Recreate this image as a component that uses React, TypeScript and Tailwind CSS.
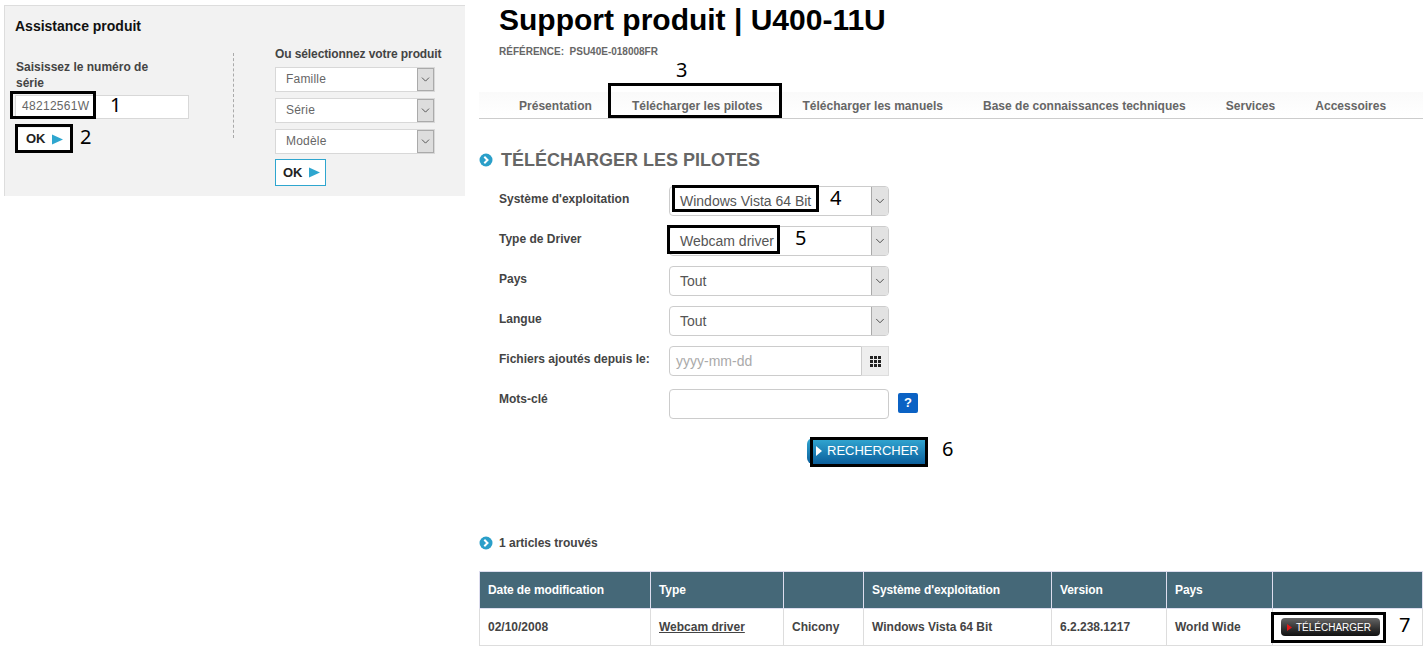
import React from "react";
import { ChevronDown } from "lucide-react";

const Frame = ({ c }: { c: string }) => (
  <div className={`absolute border-[3px] border-black ${c}`} />
);

const Num = ({ c, n }: { c: string; n: string }) => (
  <span className={`absolute font-['Noto_Sans',sans-serif] text-[20px] leading-[24px] text-black ${c}`}>{n}</span>
);

const SmallSelect = ({ label }: { label: string }) => (
  <div className="flex h-[25px] w-[160px] border border-[#d8d8d8] bg-white">
    <span className="flex-1 pl-[10px] text-[12px] leading-[23px] tracking-[0.2px] text-[#666]">{label}</span>
    <span className="flex w-[17px] items-center justify-center border border-[#aaa] bg-[#ddd]">
      <ChevronDown size={13} strokeWidth={1.6} className="text-[#444]" />
    </span>
  </div>
);

const OkButton = ({ c }: { c: string }) => (
  <div className={`flex items-center gap-[6px] bg-white text-[13px] font-bold text-[#222] ${c}`}>
    OK
    <svg width="11" height="11" viewBox="0 0 11 11"><path d="M0 0.5 L11 5.5 L0 10.5 Z" fill="#2ea6cf" /></svg>
  </div>
);

const Bullet = () => (
  <svg width="14" height="14" viewBox="0 0 14 14" className="shrink-0">
    <circle cx="7" cy="7" r="6.5" fill="#2a9fc9" />
    <path d="M5.3 3.8 L8.5 7 L5.3 10.2" fill="none" stroke="#fff" strokeWidth="2" />
  </svg>
);

const BigSelect = ({ value }: { value: string }) => (
  <div className="flex h-[30px] w-[220px] overflow-hidden rounded-[4px] border border-[#ccc] bg-white">
    <span className="flex-1 pl-[10px] text-[14px] leading-[28px] text-[#555]">{value}</span>
    <span className="flex w-[17px] items-center justify-center border-l border-[#aaa] bg-[#e2e2e2]">
      <ChevronDown size={14} strokeWidth={1.6} className="text-[#444]" />
    </span>
  </div>
);

const FormRow = ({ label, labelClass = "pt-[5px]", children }: { label: string; labelClass?: string; children: React.ReactNode }) => (
  <div className="flex h-[30px] pl-[20px]">
    <span className={`w-[170px] text-[12px] leading-[16px] font-bold text-[#444] ${labelClass}`}>{label}</span>
    {children}
  </div>
);

const tabs = ["Présentation", "Télécharger les pilotes", "Télécharger les manuels", "Base de connaissances techniques", "Services", "Accessoires"];

const cols = [
  { w: "w-[171px]", h: "Date de modification", d: "02/10/2008" },
  { w: "w-[133px]", h: "Type", d: "Webcam driver", link: true },
  { w: "w-[80px]", h: "", d: "Chicony" },
  { w: "w-[188px]", h: "Système d'exploitation", d: "Windows Vista 64 Bit" },
  { w: "w-[115px]", h: "Version", d: "6.2.238.1217" },
  { w: "w-[106px]", h: "Pays", d: "World Wide" },
];

export default function App() {
  return (
    <div className="relative flex h-[650px] w-[1426px] overflow-hidden bg-white pl-[4px] font-['Liberation_Sans',Arial,sans-serif]">
      {/* left panel */}
      <section className="mt-[5px] h-[191px] w-[461px] shrink-0 border-t border-l border-[#ddd] bg-[#f2f2f2]">
        <h2 className="pl-[10px] pt-[12px] text-[14px] leading-[16px] font-bold text-[#111]">Assistance produit</h2>
        <div className="flex">
          <div className="w-[228px] pl-[11px] pt-[25px]">
            <p className="w-[150px] text-[12px] leading-[16px] font-bold text-[#444]">Saisissez le numéro de série</p>
            <div className="mt-[4px] h-[24px] w-[174px] -translate-x-[1px] border border-[#d8d8d8] bg-white pl-[6px] text-[12px] leading-[21px] tracking-[0.3px] text-[#666]">48212561W</div>
            <OkButton c="mt-[9px] h-[22px] w-[54px] pl-[10px]" />
          </div>
          <div className="mt-[19px] h-[85px] w-0 border-l border-dashed border-[#aaa]" />
          <div className="pl-[41px] pt-[12px]">
            <p className="text-[12px] leading-[16px] font-bold tracking-[-0.1px] text-[#444]">Ou sélectionnez votre produit</p>
            <div className="mt-[5px] flex flex-col gap-[6px]">
              <SmallSelect label="Famille" />
              <SmallSelect label="Série" />
              <SmallSelect label="Modèle" />
            </div>
            <OkButton c="mt-[5px] h-[27px] w-[51px] border border-[#2ea6cf] pl-[7px]" />
          </div>
        </div>
      </section>

      {/* right column */}
      <main className="ml-[14px] w-[944px] shrink-0">
        <h1 className="pl-[20px] pt-[3px] text-[30px] leading-[34px] font-bold text-black">Support produit | U400-11U</h1>
        <p className="pl-[20px] pt-[9px] text-[10px] leading-[12px] font-bold text-[#666]">RÉFÉRENCE:&nbsp; PSU40E-018008FR</p>
        <nav className="mt-[34px] flex h-[27px] border-b border-[#ccc] bg-gradient-to-b from-[#fafafa] to-white pl-[20px]">
          {tabs.map((t) => (
            <span key={t} className="px-[20px] pt-[7px] text-[12px] leading-[14px] font-bold tracking-[0.02px] whitespace-nowrap text-[#666]">{t}</span>
          ))}
        </nav>
        <div className="mt-[31px] flex h-[20px] items-center gap-[8px]">
          <Bullet />
          <h2 className="text-[18px] font-bold text-[#666]">TÉLÉCHARGER LES PILOTES</h2>
        </div>
        <div className="mt-[16px] flex flex-col gap-[10px]">
          <FormRow label="Système d'exploitation"><BigSelect value="Windows Vista 64 Bit" /></FormRow>
          <FormRow label="Type de Driver"><BigSelect value="Webcam driver" /></FormRow>
          <FormRow label="Pays"><BigSelect value="Tout" /></FormRow>
          <FormRow label="Langue"><BigSelect value="Tout" /></FormRow>
          <FormRow label="Fichiers ajoutés depuis le:">
            <div className="flex h-[30px] w-[220px]">
              <span className="flex-1 rounded-l-[4px] border border-[#ccc] bg-white pl-[6px] text-[14px] leading-[28px] text-[#aaa]">yyyy-mm-dd</span>
              <span className="flex w-[27px] items-center justify-center border border-l-0 border-[#ddd] bg-[#eee]">
                <svg width="11" height="11" viewBox="0 0 11 11" fill="#222">
                  {[0, 4, 8].flatMap((y) => [0, 4, 8].map((x) => <rect key={`${x}${y}`} x={x} y={y} width="3" height="3" />))}
                </svg>
              </span>
            </div>
          </FormRow>
        </div>
        <div className="mt-[13px]">
          <FormRow label="Mots-clé" labelClass="pt-[2px]">
            <div className="h-[30px] w-[220px] rounded-[4px] border border-[#ccc] bg-white" />
            <span className="mt-[4px] ml-[9px] flex h-[20px] w-[20px] items-center justify-center rounded-[2px] bg-[#0b62c4] text-[13px] font-bold text-white">?</span>
          </FormRow>
        </div>
        <div className="mt-[19px] flex h-[26px] pl-[328px]">
          <div className="flex w-[118px] items-center rounded-l-[6px] bg-gradient-to-b from-[#33a9d3] to-[#0b5f9c] pl-[9px] text-[13px] text-white">
            <svg width="6" height="10" viewBox="0 0 6 10" className="mr-[5px]"><path d="M0 0 L6 5 L0 10 Z" fill="#fff" /></svg>
            RECHERCHER
          </div>
        </div>
        <div className="mt-[71px] flex h-[16px] items-center gap-[6px]">
          <Bullet />
          <span className="text-[12px] font-bold text-[#444]">1 articles trouvés</span>
        </div>
        <table className="mt-[20px] w-[944px] table-fixed border-collapse">
          <thead>
            <tr className="h-[37px] bg-[#456878]">
              {cols.map((c) => (
                <th key={c.h + c.w} className={`${c.w} border border-[#dde] pl-[8px] text-left text-[12px] font-bold tracking-[-0.1px] text-white`}>{c.h}</th>
              ))}
              <th className="border border-[#dde]" />
            </tr>
          </thead>
          <tbody>
            <tr className="h-[37px]">
              {cols.map((c) => (
                <td key={c.h + c.w} className={`border border-[#ddd] pl-[8px] text-[12px] font-bold text-[#444] ${c.link ? "underline" : ""}`}>{c.d}</td>
              ))}
              <td className="border border-[#ddd] pl-[8px]">
                <div className="flex h-[18px] w-[99px] items-center rounded-[4px] bg-gradient-to-b from-[#666] to-[#111] pl-[6px] text-[10px] text-white">
                  <svg width="5" height="7" viewBox="0 0 5 7" className="mr-[4px]"><path d="M0 0 L5 3.5 L0 7 Z" fill="#e01818" /></svg>
                  TÉLÉCHARGER
                </div>
              </td>
            </tr>
          </tbody>
        </table>
      </main>

      {/* annotations */}
      <Frame c="left-[10px] top-[91px] h-[28px] w-[86px]" />
      <Num c="left-[110px] top-[93px]" n="1" />
      <Frame c="left-[15px] top-[124px] h-[29px] w-[58px]" />
      <Num c="left-[80px] top-[125px]" n="2" />
      <Frame c="left-[608px] top-[83px] h-[35px] w-[174px]" />
      <Num c="left-[676px] top-[58px]" n="3" />
      <Frame c="left-[672px] top-[185px] h-[27px] w-[147px]" />
      <Num c="left-[830px] top-[186px]" n="4" />
      <Frame c="left-[667px] top-[225px] h-[29px] w-[113px]" />
      <Num c="left-[795px] top-[226px]" n="5" />
      <Frame c="left-[810px] top-[437px] h-[30px] w-[118px]" />
      <Num c="left-[942px] top-[437px]" n="6" />
      <Frame c="left-[1271px] top-[612px] h-[31px] w-[115px]" />
      <Num c="left-[1399px] top-[613px]" n="7" />
    </div>
  );
}
